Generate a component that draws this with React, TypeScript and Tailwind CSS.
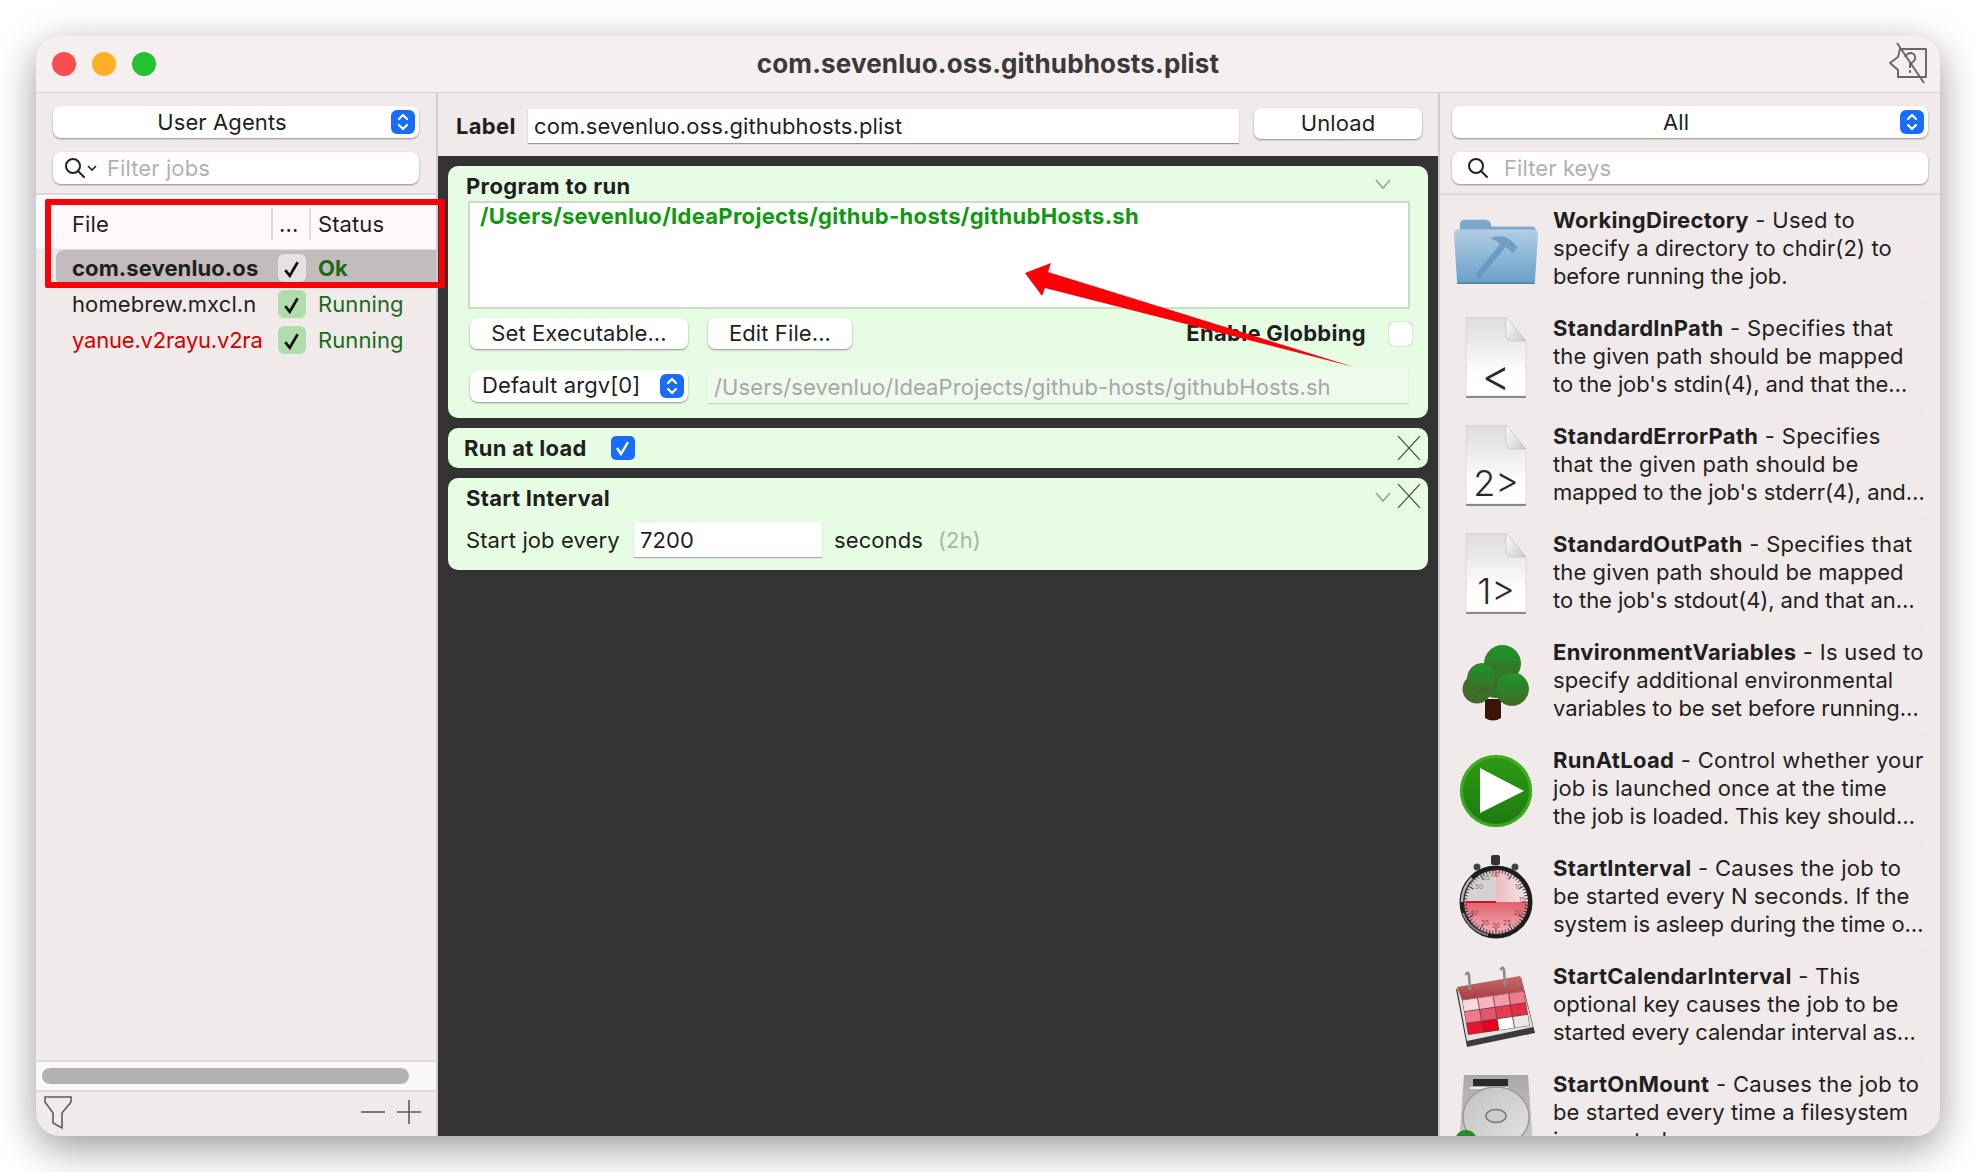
import React from 'react';

const font = { fontFamily: 'Inter, "Liberation Sans", sans-serif' };

const Stepper = ({ className = '' }: { className?: string }) => (
  <span className={`flex h-[24px] w-[24px] shrink-0 items-center justify-center rounded-[6px] bg-[#1a6dfb] ${className}`}>
    <svg width="14" height="20" viewBox="0 0 14 20" fill="none" stroke="#fff" strokeWidth="2.2" strokeLinecap="round" strokeLinejoin="round">
      <path d="M3 7l4-4 4 4" />
      <path d="M3 13l4 4 4-4" />
    </svg>
  </span>
);

const Popup = ({ label }: { label: string }) => (
  <div className="flex h-[32px] items-center rounded-[8px] bg-white pr-[4px] shadow-[0_1px_2px_rgba(0,0,0,0.4)]">
    <span className="flex-1 text-center text-[22px] leading-[32px] tracking-[0.1px] text-[#1f1f1f]">{label}</span>
    <Stepper />
  </div>
);

const SearchGlass = () => (
  <svg width="22" height="22" viewBox="0 0 22 22" fill="none" stroke="#222" strokeWidth="2">
    <circle cx="9" cy="9" r="7" />
    <path d="M14 14l6 6" strokeLinecap="round" />
  </svg>
);

const Button = ({ label, className = '' }: { label: string; className?: string }) => (
  <div className={`flex h-[31px] items-center justify-center rounded-[7px] bg-white text-[22px] tracking-[0.1px] text-[#1f1f1f] shadow-[0_1px_2px_rgba(0,0,0,0.4)] ${className}`}>
    {label}
  </div>
);

const Chevron = () => (
  <svg width="16" height="10" viewBox="0 0 16 10" fill="none" stroke="#9aa89a" strokeWidth="1.8">
    <path d="M1 1l7 8 7-8" />
  </svg>
);

const CloseX = () => (
  <svg width="24" height="24" viewBox="0 0 24 24" fill="none" stroke="#555" strokeWidth="1.2">
    <path d="M1 0l22 24M23 0L1 24" />
  </svg>
);

const CheckMark = () => (
  <svg className="mt-[2px]" width="18" height="18" viewBox="0 0 16 16" fill="none" stroke="#111" strokeWidth="2.4">
    <path d="M2 9l4 5 7-12" />
  </svg>
);

const jobs = [
  { name: 'com.sevenluo.os', status: 'Ok', selected: true, color: 'text-[#1f1f1f]' },
  { name: 'homebrew.mxcl.n', status: 'Running', selected: false, color: 'text-[#1f1f1f]' },
  { name: 'yanue.v2rayu.v2ra', status: 'Running', selected: false, color: 'text-[#d40000] tracking-[-0.2px]' },
];

const JobRow = ({ job }: { job: (typeof jobs)[number] }) => (
  <div className={`ml-[20px] flex h-[36px] items-center text-[22px] tracking-[0.1px] ${job.selected ? 'rounded-l-[8px] bg-[#c2bcbc] font-bold' : ''}`}>
    <span className={`w-[222px] shrink-0 overflow-hidden whitespace-nowrap pl-[16px] ${job.color}`}>{job.name}</span>
    <span className={`flex h-[28px] w-[28px] shrink-0 items-center justify-center rounded-[6px] ${job.selected ? 'bg-[#e6e2e2]' : 'bg-[#b0dcae]'}`}>
      <CheckMark />
    </span>
    <span className="ml-[12px] text-[#1a6b1a]">{job.status}</span>
  </div>
);

const DocIcon = ({ glyph, size = 'text-[36px]' }: { glyph: string; size?: string }) => (
  <div className="relative h-[80px] w-[62px]">
    <svg width="62" height="82" viewBox="0 0 62 82" className="absolute left-0 top-0">
      <defs>
        <linearGradient id="docFill" x1="0" y1="0" x2="0" y2="1">
          <stop offset="0" stopColor="#dcdcdc" />
          <stop offset="0.75" stopColor="#ffffff" />
        </linearGradient>
        <linearGradient id="docFold" x1="0" y1="0" x2="1" y2="1">
          <stop offset="0" stopColor="#ffffff" />
          <stop offset="1" stopColor="#c8c8c8" />
        </linearGradient>
      </defs>
      <path d="M1 0H41L61 24V79H1Z" fill="url(#docFill)" stroke="#cfcfcf" strokeWidth="0.6" />
      <path d="M41 0V19Q41 24 46 24H61Z" fill="url(#docFold)" stroke="#b5b5b5" strokeWidth="0.5" />
      <path d="M1 80H61" stroke="#8a8a8a" strokeWidth="2" />
    </svg>
    <span className={`absolute inset-x-0 bottom-[4px] text-center font-light leading-[36px] text-[#2a2a2a] ${size}`}>{glyph}</span>
  </div>
);

const FolderIcon = () => (
  <svg className="mt-[6px]" width="86" height="66" viewBox="0 0 86 66">
    <defs>
      <linearGradient id="folderFill" x1="0" y1="0" x2="0" y2="1">
        <stop offset="0" stopColor="#b2cfe4" />
        <stop offset="1" stopColor="#6a9fc9" />
      </linearGradient>
    </defs>
    <path d="M6 5Q6 0 11 0H33Q37 0 38 5V7H80Q84 7 84 12V20H6Z" fill="#7ea9cc" />
    <path d="M0 14Q0 10 5 10H80Q86 10 86 14L83 62Q83 65 79 65H6Q3 65 3 62Z" fill="url(#folderFill)" />
    <path d="M37 19Q50 14 58 21L65 28L60 34L53 28L26 60L22 56L47 25Q43 21 37 19Z" fill="#5f93bd" opacity="0.75" />
    <path d="M3 65H83" stroke="#55809f" strokeWidth="1.5" />
  </svg>
);

const TreeIcon = () => (
  <svg className="mt-[4px]" width="68" height="76" viewBox="0 0 68 76">
    <defs>
      <linearGradient id="treeTop" x1="0" y1="0" x2="0" y2="1">
        <stop offset="0" stopColor="#20962a" />
        <stop offset="1" stopColor="#3d6a26" />
      </linearGradient>
    </defs>
    <path d="M23 54H39V73Q31 78 23 73Z" fill="#3a1408" />
    <circle cx="40.5" cy="18.5" r="18.5" fill="url(#treeTop)" />
    <circle cx="34" cy="36" r="17" fill="#2f7a2a" />
    <circle cx="15" cy="44" r="14.5" fill="#3e6f28" />
    <circle cx="20" cy="33" r="14.5" fill="url(#treeTop)" stroke="#4f5e26" strokeWidth="0.8" />
    <circle cx="50" cy="44" r="16.5" fill="url(#treeTop)" stroke="#4f5e26" strokeWidth="0.8" />
  </svg>
);

const PlayIcon = () => (
  <svg className="mt-[4px]" width="72" height="72" viewBox="0 0 72 72">
    <defs>
      <linearGradient id="playFill" x1="0" y1="0" x2="0" y2="1">
        <stop offset="0" stopColor="#2f9a14" />
        <stop offset="1" stopColor="#1c7a10" />
      </linearGradient>
    </defs>
    <circle cx="36" cy="36" r="36" fill="url(#playFill)" />
    <circle cx="36" cy="36" r="34.5" fill="none" stroke="#43b41f" strokeWidth="3" opacity="0.8" />
    <path d="M20 13L64 36L20 58Z" fill="#fff" />
  </svg>
);

const WatchIcon = () => {
  const ticks = Array.from({ length: 60 }, (_, i) => i * 6);
  const labels = [
    ['60', 37, 22, '#d8475a'], ['5', 50, 24, '#777'], ['10', 60, 34, '#777'], ['15', 64, 47, '#d8475a'],
    ['20', 60, 60, '#8a3b45'], ['25', 49, 70, '#8a3b45'], ['30', 38, 73, '#c9142a'], ['35', 27, 70, '#8a3b45'],
    ['40', 16, 60, '#8a3b45'], ['50', 21, 34, '#777'], ['55', 28, 25, '#777'],
  ] as const;
  return (
    <svg width="76" height="84" viewBox="0 0 76 84">
      <defs>
        <linearGradient id="watchRed" x1="0" y1="0" x2="0" y2="1">
          <stop offset="0" stopColor="#e4606f" />
          <stop offset="1" stopColor="#f0b3bb" />
        </linearGradient>
        <linearGradient id="watchPink" x1="0" y1="0" x2="1" y2="0">
          <stop offset="0" stopColor="#f0b9bf" />
          <stop offset="1" stopColor="#f1eaea" />
        </linearGradient>
      </defs>
      <rect x="33" y="0" width="9" height="10" rx="2" fill="#333" />
      <circle cx="19" cy="12" r="3.5" fill="#444" />
      <circle cx="57" cy="12" r="3.5" fill="#444" />
      <circle cx="38" cy="47" r="34" fill="#d6d2d2" stroke="#1d1d1d" strokeWidth="5" />
      <path d="M6 47H70A32 32 0 0 1 6 47Z" fill="url(#watchRed)" />
      <path d="M38 47V15A32 32 0 0 1 70 47Z" fill="url(#watchPink)" />
      <path d="M4 47A34 34 0 0 1 14 23" fill="none" stroke="#b9b6b6" strokeWidth="2.5" />
      <path d="M5 58A34 34 0 0 0 30 80" fill="none" stroke="#8a8686" strokeWidth="2" />
      {ticks.map(a => (
        <line key={a} x1="38" y1="14" x2="38" y2={a % 30 === 0 ? 21 : 18} stroke="#333" strokeWidth="0.9" transform={`rotate(${a} 38 47)`} />
      ))}
      {labels.map(([t, x, y, c]) => (
        <text key={t} x={x} y={y} fontSize="6.5" textAnchor="middle" fill={c}>{t}</text>
      ))}
      <path d="M8 47H38" stroke="#c9142a" strokeWidth="2" />
    </svg>
  );
};

const CalendarIcon = () => {
  const cells = [
    ['#fbd7dc', '#f9b4bf', '#f59aa8', '#ee7a8b'],
    ['#ee7a8b', '#e5566b', '#e83a50', '#e42c44'],
    ['#e5152f', '#e6001d', '#ffffff', '#e8e8e8'],
  ];
  // grid corners, interpolated across the tilted page
  const pt = (u: number, v: number) => {
    const x = 6 + 62 * u + 6 * v;
    const y = 35 - 9 * u + 35 * v;
    return `${x},${y}`;
  };
  return (
    <svg className="mt-[4px]" width="80" height="84" viewBox="0 0 80 84">
      <defs>
        <linearGradient id="calHead" x1="0" y1="0" x2="0" y2="1">
          <stop offset="0" stopColor="#c96a6c" />
          <stop offset="1" stopColor="#a63c40" />
        </linearGradient>
      </defs>
      <path d="M0 24L65 12L79 68L11 82Z" fill="#3b3b3b" />
      <path d="M1 22L64 11L77 62L11 76Z" fill="#e4e4e4" />
      <path d="M1 22L64 11L68 26L6 35Z" fill="url(#calHead)" />
      <path d="M6 35L68 26L74 61L12 70Z" fill="#6d4548" />
      {cells.map((row, r) =>
        row.map((c, i) => (
          <polygon
            key={`${r}-${i}`}
            fill={c}
            points={`${pt((i + 0.03) / 4, (r + 0.04) / 3)} ${pt((i + 0.97) / 4, (r + 0.04) / 3)} ${pt((i + 0.97) / 4, (r + 0.96) / 3)} ${pt((i + 0.03) / 4, (r + 0.96) / 3)}`}
          />
        )),
      )}
      <path d="M10 9Q12 6 13 10L14 24" fill="none" stroke="#8d8d8d" strokeWidth="2.6" strokeLinecap="round" />
      <path d="M45 4Q47 1 48 5L49 20" fill="none" stroke="#8d8d8d" strokeWidth="2.6" strokeLinecap="round" />
    </svg>
  );
};

const DiskIcon = () => (
  <svg className="mt-[8px] overflow-visible" width="76" height="84" viewBox="0 0 76 84">
    <defs>
      <linearGradient id="diskFill" x1="0" y1="0" x2="0" y2="1">
        <stop offset="0" stopColor="#a9a9a9" />
        <stop offset="1" stopColor="#d2d2d2" />
      </linearGradient>
      <linearGradient id="diskPlate" x1="0" y1="0" x2="1" y2="1">
        <stop offset="0" stopColor="#c2c2c2" />
        <stop offset="1" stopColor="#e2e2e2" />
      </linearGradient>
    </defs>
    <path d="M6 0H70L76 84H0Z" fill="url(#diskFill)" />
    <rect x="15" y="4" width="35" height="7" fill="#2a2a2a" />
    <path d="M12 13H50" stroke="#eee" strokeWidth="2" />
    <ellipse cx="38" cy="42" rx="33" ry="30" fill="url(#diskPlate)" stroke="#9a9a9a" strokeWidth="1.5" />
    <ellipse cx="38" cy="41" rx="10" ry="6.5" fill="#cdcdcd" stroke="#777" strokeWidth="1.5" />
    <circle cx="8" cy="66" r="11" fill="#1f8f1f" />
  </svg>
);

const keys = [
  { name: 'WorkingDirectory', icon: <FolderIcon />, lines: [' - Used to', 'specify a directory to chdir(2) to', 'before running the job.'] },
  { name: 'StandardInPath', icon: <DocIcon glyph="<" size="text-[44px]" />, lines: [' - Specifies that', 'the given path should be mapped', "to the job's stdin(4), and that the…"] },
  { name: 'StandardErrorPath', icon: <DocIcon glyph="2>" />, lines: [' - Specifies', 'that the given path should be', "mapped to the job's stderr(4), and…"] },
  { name: 'StandardOutPath', icon: <DocIcon glyph="1>" />, lines: [' - Specifies that', 'the given path should be mapped', "to the job's stdout(4), and that an…"] },
  { name: 'EnvironmentVariables', icon: <TreeIcon />, lines: [' - Is used to', 'specify additional environmental', 'variables to be set before running…'] },
  { name: 'RunAtLoad', icon: <PlayIcon />, lines: [' - Control whether your', 'job is launched once at the time', 'the job is loaded. This key should…'] },
  { name: 'StartInterval', icon: <WatchIcon />, lines: [' - Causes the job to', 'be started every N seconds. If the', 'system is asleep during the time o…'] },
  { name: 'StartCalendarInterval', icon: <CalendarIcon />, lines: [' - This', 'optional key causes the job to be', 'started every calendar interval as…'] },
  { name: 'StartOnMount', icon: <DiskIcon />, lines: [' - Causes the job to', 'be started every time a filesystem', 'is mounted.'] },
];

const KeyRow = ({ item }: { item: (typeof keys)[number] }) => (
  <div className="mx-[14px] flex h-[108px] shrink-0 border-b border-[#e8e2e2]">
    <div className="flex w-[84px] shrink-0 items-center justify-center">{item.icon}</div>
    <div className="ml-[15px] whitespace-nowrap pt-[11px] text-[22px] leading-[28px] tracking-[0.1px] text-[#1f1f1f]">
      <div>
        <b className="tracking-[0.3px]">{item.name}</b>
        <span className="tracking-[0.3px]">{item.lines[0]}</span>
      </div>
      <div>{item.lines[1]}</div>
      <div className="tracking-[-0.1px]">{item.lines[2]}</div>
    </div>
  </div>
);

export default function App() {
  return (
    <div style={font} className="relative h-[1172px] w-[1976px] overflow-hidden bg-white pl-[36px] pt-[36px]">
      <div className="flex h-[1100px] w-[1904px] flex-col overflow-hidden rounded-[24px] bg-[#f0eaea] shadow-[0_12px_40px_rgba(0,0,0,0.4)]">
        {/* Title bar */}
        <div className="relative flex h-[57px] shrink-0 items-center justify-center border-b border-[#d6d0d0] bg-[#f5efef] pb-[2px]">
          <div className="absolute left-[16px] top-[16px] flex gap-[16px]">
            <span className="h-[24px] w-[24px] rounded-full bg-[#fb4d4f]" />
            <span className="h-[24px] w-[24px] rounded-full bg-[#fdb027]" />
            <span className="h-[24px] w-[24px] rounded-full bg-[#24c133]" />
          </div>
          <span className="text-[26px] font-bold tracking-[0.15px] text-[#3a3a3a]">com.sevenluo.oss.githubhosts.plist</span>
          <svg className="absolute right-[12px] top-[6px]" width="40" height="42" viewBox="0 0 40 42" fill="none" stroke="#666" strokeWidth="1.9" strokeLinejoin="round">
            <path d="M12 7H38V35H10V28L2 21L10 15Z" />
            <path d="M17 15Q19 11 23 11Q28 12 27 17Q26 20 22 22V26M22 28V31" />
            <path d="M9 1L36 41" />
          </svg>
        </div>

        <div className="flex min-h-0 flex-1">
          {/* Left column: jobs */}
          <div className="flex w-[402px] shrink-0 flex-col border-r-2 border-[#d2cccc]">
            <div className="flex h-[102px] shrink-0 flex-col gap-[14px] border-b-2 border-[#dfd9d9] px-[17px] pt-[13px]">
              <Popup label="User Agents" />
              <div className="flex h-[32px] items-center rounded-[8px] bg-white pl-[11px] shadow-[0_1px_2px_rgba(0,0,0,0.4)]">
                <SearchGlass />
                <svg className="ml-[1px]" width="10" height="7" viewBox="0 0 10 7" fill="none" stroke="#222" strokeWidth="1.6">
                  <path d="M1 1l4 4 4-4" />
                </svg>
                <span className="ml-[10px] pt-[1px] text-[22px] tracking-[0.1px] text-[#b4b0b0]">Filter jobs</span>
              </div>
            </div>
            <div className="flex h-[55px] shrink-0 items-center border-b border-[#e4dede] bg-[#fdf9fa] pt-[4px] text-[22px] tracking-[0.1px] text-[#1f1f1f]">
              <span className="w-[235px] pl-[36px]">File</span>
              <span className="flex h-[32px] w-[40px] items-center border-x-2 border-[#e2dddd] pl-[6px]">...</span>
              <span className="pl-[7px]">Status</span>
            </div>
            <div className="flex flex-1 flex-col">
              {jobs.map(job => (
                <JobRow key={job.name} job={job} />
              ))}
            </div>
            <div className="flex h-[32px] shrink-0 items-center border-y-2 border-[#dfd9d9] bg-[#f9f8f8] pl-[6px]">
              <div className="h-[16px] w-[367px] rounded-full bg-[#b2b2b2]" />
            </div>
            <div className="flex h-[44px] shrink-0 items-start justify-between pl-[8px] pr-[15px]">
              <svg className="mt-[4px]" width="28" height="34" viewBox="0 0 28 34" fill="none" stroke="#5f5b5b" strokeWidth="1.6">
                <path d="M1 1H27V6L18 17V32L9 27V17L1 6Z" />
              </svg>
              <div className="mt-[8px] flex gap-[12px]">
                <svg width="24" height="24" viewBox="0 0 24 24" stroke="#5f5b5b" strokeWidth="1.6">
                  <path d="M0 12H24" />
                </svg>
                <svg width="24" height="24" viewBox="0 0 24 24" stroke="#5f5b5b" strokeWidth="1.6">
                  <path d="M0 12H24M12 0V24" />
                </svg>
              </div>
            </div>
          </div>

          {/* Center column: editor */}
          <div className="flex min-w-0 flex-1 flex-col">
            <div className="flex h-[63px] shrink-0 items-center pl-[18px] pr-[16px]">
              <span className="w-[72px] pt-[3px] text-[22px] font-bold tracking-[0.3px] text-[#1f1f1f]">Label</span>
              <div className="mt-[3px] flex h-[34px] w-[711px] items-center bg-white pl-[6px] text-[22px] tracking-[0.1px] text-[#1f1f1f] shadow-[0_1px_1px_rgba(0,0,0,0.35)]">
                com.sevenluo.oss.githubhosts.plist
              </div>
              <Button label="Unload" className="mb-[2px] ml-[15px] w-[168px]" />
            </div>
            <div className="flex flex-1 flex-col gap-[10px] bg-[#333333] px-[10px] pt-[10px]">
              <div className="relative h-[252px] rounded-[10px] bg-[#e6fde3] pl-[20px] pr-[18px] pt-[6px]">
                <div className="-ml-[2px] h-[29px] text-[22px] font-bold leading-[28px] tracking-[0.35px] text-[#1f1f1f]">Program to run</div>
                <span className="absolute right-[37px] top-[13px]"><Chevron /></span>
                <div className="h-[108px] border-2 border-[#c9dcc7] bg-white pl-[10px] pt-[1px] text-[22px] font-bold leading-[24px] tracking-[0.3px] text-[#0e9a0e]">
                  /Users/sevenluo/IdeaProjects/github-hosts/githubHosts.sh
                </div>
                <div className="ml-[2px] mt-[8px] flex items-center">
                  <Button label="Set Executable..." className="w-[218px]" />
                  <Button label="Edit File..." className="ml-[20px] w-[144px]" />
                  <span className="ml-auto text-[22px] font-bold tracking-[0.3px] text-[#1f1f1f]">Enable Globbing</span>
                  <span className="ml-[23px] mr-[-2px] h-[24px] w-[23px] rounded-[5px] bg-white shadow-[0_0_1px_rgba(0,0,0,0.6)]" />
                </div>
                <div className="ml-[2px] mt-[18px] flex items-center">
                  <div className="flex h-[32px] w-[218px] items-center rounded-[8px] bg-white pl-[12px] pr-[4px] shadow-[0_1px_2px_rgba(0,0,0,0.4)]">
                    <span className="flex-1 text-[22px] tracking-[0.1px] text-[#1f1f1f]">Default argv[0]</span>
                    <Stepper />
                  </div>
                  <div className="ml-[20px] mt-[3px] flex h-[32px] w-[700px] items-center bg-[#eefaec] pl-[6px] text-[22px] tracking-[0.1px] text-[#a7a7a7] shadow-[0_1px_1px_rgba(0,0,0,0.15)]">
                    /Users/sevenluo/IdeaProjects/github-hosts/githubHosts.sh
                  </div>
                </div>
              </div>

              <div className="flex h-[40px] items-center rounded-[10px] bg-[#e6fde3] pl-[16px] pr-[7px]">
                <span className="text-[22px] font-bold tracking-[0.3px] text-[#1f1f1f]">Run at load</span>
                <span className="ml-[24px] flex h-[24px] w-[24px] items-center justify-center rounded-[5px] bg-[#1a6dfb]">
                  <svg width="16" height="16" viewBox="0 0 16 16" fill="none" stroke="#fff" strokeWidth="2.4">
                    <path d="M2 8l4 6 7-12" />
                  </svg>
                </span>
                <span className="ml-auto"><CloseX /></span>
              </div>

              <div className="relative h-[92px] rounded-[10px] bg-[#e6fde3] pl-[18px]">
                <div className="pt-[6px] text-[22px] font-bold leading-[28px] tracking-[0.3px] text-[#1f1f1f]">Start Interval</div>
                <span className="absolute right-[37px] top-[14px]"><Chevron /></span>
                <span className="absolute right-[7px] top-[6px]"><CloseX /></span>
                <div className="mt-[11px] flex items-center text-[22px] tracking-[0.1px] text-[#1f1f1f]">
                  <span className="w-[168px]">Start job every</span>
                  <div className="flex h-[34px] w-[188px] items-center bg-white pl-[6px] shadow-[0_1px_1px_rgba(0,0,0,0.3)]">7200</div>
                  <span className="ml-[12px]">seconds</span>
                  <span className="ml-[15px] text-[#a9b4a7]">(2h)</span>
                </div>
              </div>
            </div>
          </div>

          {/* Right column: keys */}
          <div className="flex w-[502px] shrink-0 flex-col overflow-hidden border-l-2 border-[#d2cccc]">
            <div className="flex h-[102px] shrink-0 flex-col gap-[14px] border-b-2 border-[#dfd9d9] px-[12px] pt-[13px]">
              <Popup label="All" />
              <div className="flex h-[32px] items-center rounded-[8px] bg-white pl-[15px] shadow-[0_1px_2px_rgba(0,0,0,0.4)]">
                <SearchGlass />
                <span className="ml-[15px] pt-[1px] text-[22px] tracking-[0.1px] text-[#b4b0b0]">Filter keys</span>
              </div>
            </div>
            {keys.map(item => (
              <KeyRow key={item.name} item={item} />
            ))}
          </div>
        </div>
      </div>

      {/* Annotations drawn over the screenshot */}
      <div className="absolute left-[45px] top-[199px] h-[89px] w-[400px] rounded-[2px] border-[6px] border-[#fb0007]" />
      <svg className="absolute left-[1020px] top-[260px]" width="345" height="112" viewBox="0 0 345 112" fill="#fb0007">
        <path d="M5 13L31 3L28 12L334 107L25 28L22 36Z" />
      </svg>
    </div>
  );
}
